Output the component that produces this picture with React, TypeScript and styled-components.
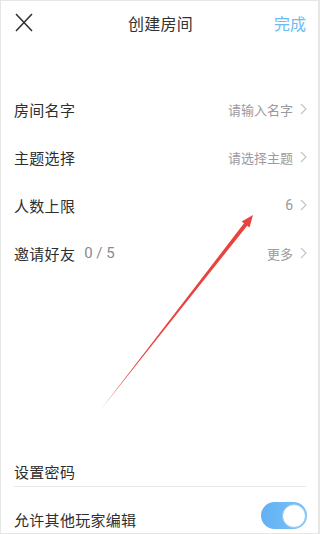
import React from "react";
import styled, { createGlobalStyle } from "styled-components";

const Global = createGlobalStyle`
  html, body { margin: 0; padding: 0; background: #fff; }
  body { font-family: "Noto Sans CJK SC", "Noto Sans", sans-serif; }
  * { box-sizing: border-box; }
`;

const Frame = styled.div`
  position: relative;
  width: 320px;
  height: 534px;
  border: 1px solid #e6e6e6;
  border-right-width: 2px;
  background: #fff;
  display: flex;
  flex-direction: column;
  overflow: hidden;
`;

const Header = styled.div`
  height: 43px;
  display: grid;
  grid-template-columns: 1fr auto 1fr;
  align-items: center;
  padding: 0 12px 0 14px;
`;

const IconButton = styled.div`
  display: flex;
  align-items: center;
  justify-self: start;
`;

const Title = styled.div`
  font-size: 16px;
  color: #333;
  letter-spacing: 0.3px;
`;

const Done = styled.div`
  justify-self: end;
  font-size: 16px;
  color: #6cbcf4;
`;

const List = styled.div`
  display: flex;
  flex-direction: column;
  padding-top: 41px;
`;

const Row = styled.div`
  height: 48px;
  display: flex;
  align-items: center;
  padding: 0 11px 0 13px;
`;

const Label = styled.div`
  font-size: 15px;
  color: #2e2e2e;
  letter-spacing: 0.3px;
`;

const Count = styled.span`
  margin-left: 9px;
  font-family: Roboto, "Noto Sans", sans-serif;
  font-size: 15px;
  color: #8a8a90;
`;

const Value = styled.div<{ $num?: boolean }>`
  margin-left: auto;
  font-size: 13px;
  color: #9a9aa0;
  font-family: ${(p) => (p.$num ? 'Roboto, "Noto Sans", sans-serif' : '"Noto Sans CJK SC", sans-serif')};
  ${(p) => (p.$num ? "font-size: 14px;" : "")}
`;

const Chevron = styled.svg`
  margin-left: 7px;
  flex: none;
`;

const Spacer = styled.div`
  flex: 1;
`;

const PasswordRow = styled.div`
  margin: 0 12px 0 13px;
  height: 30px;
  display: flex;
  align-items: center;
  border-bottom: 1px solid #e8e8e8;
`;

const ToggleRow = styled.div`
  height: 46px;
  display: flex;
  align-items: flex-start;
  justify-content: space-between;
  padding: 0 11px 0 13px;
`;

const ToggleLabel = styled(Label)`
  margin-top: 24px;
  line-height: 18px;
`;

const Toggle = styled.div`
  margin-top: 15px;
  width: 46px;
  height: 27px;
  border-radius: 14px;
  background: linear-gradient(90deg, #62b1f3, #7cc3f7);
  display: flex;
  align-items: center;
  justify-content: flex-end;
  padding-right: 1px;
`;

const Knob = styled.div`
  width: 24px;
  height: 24px;
  border-radius: 50%;
  background: #fff;
  border: 1.5px solid #8ccaf5;
`;

const Overlay = styled.svg`
  position: absolute;
  left: -1px;
  top: -1px;
  pointer-events: none;
`;

const Arrow = () => (
  <Chevron width="7" height="12" viewBox="0 0 7 12">
    <polyline points="1,1 6,6 1,11" fill="none" stroke="#c4c4c8" strokeWidth="1.1" />
  </Chevron>
);

export default function App() {
  return (
    <>
      <Global />
      <Frame>
        <Header>
          <IconButton>
            <svg width="18" height="19" viewBox="0 0 18 19">
              <path d="M1 1 L17 18 M17 1 L1 18" stroke="#333" strokeWidth="1.6" fill="none" />
            </svg>
          </IconButton>
          <Title>创建房间</Title>
          <Done>完成</Done>
        </Header>
        <List>
          <Row>
            <Label>房间名字</Label>
            <Value>请输入名字</Value>
            <Arrow />
          </Row>
          <Row>
            <Label>主题选择</Label>
            <Value>请选择主题</Value>
            <Arrow />
          </Row>
          <Row>
            <Label>人数上限</Label>
            <Value $num>6</Value>
            <Arrow />
          </Row>
          <Row>
            <Label>邀请好友</Label>
            <Count>0 / 5</Count>
            <Value>更多</Value>
            <Arrow />
          </Row>
        </List>
        <Spacer />
        <PasswordRow>
          <Label>设置密码</Label>
        </PasswordRow>
        <ToggleRow>
          <ToggleLabel>允许其他玩家编辑</ToggleLabel>
          <Toggle>
            <Knob />
          </Toggle>
        </ToggleRow>
        <Overlay width="320" height="534" viewBox="0 0 320 534">
          <polygon
            points="102,408 247.2,225.7 249.5,227.6 253,215 241.7,221.4 244.0,223.3"
            fill="#e8443f"
          />
        </Overlay>
      </Frame>
    </>
  );
}
